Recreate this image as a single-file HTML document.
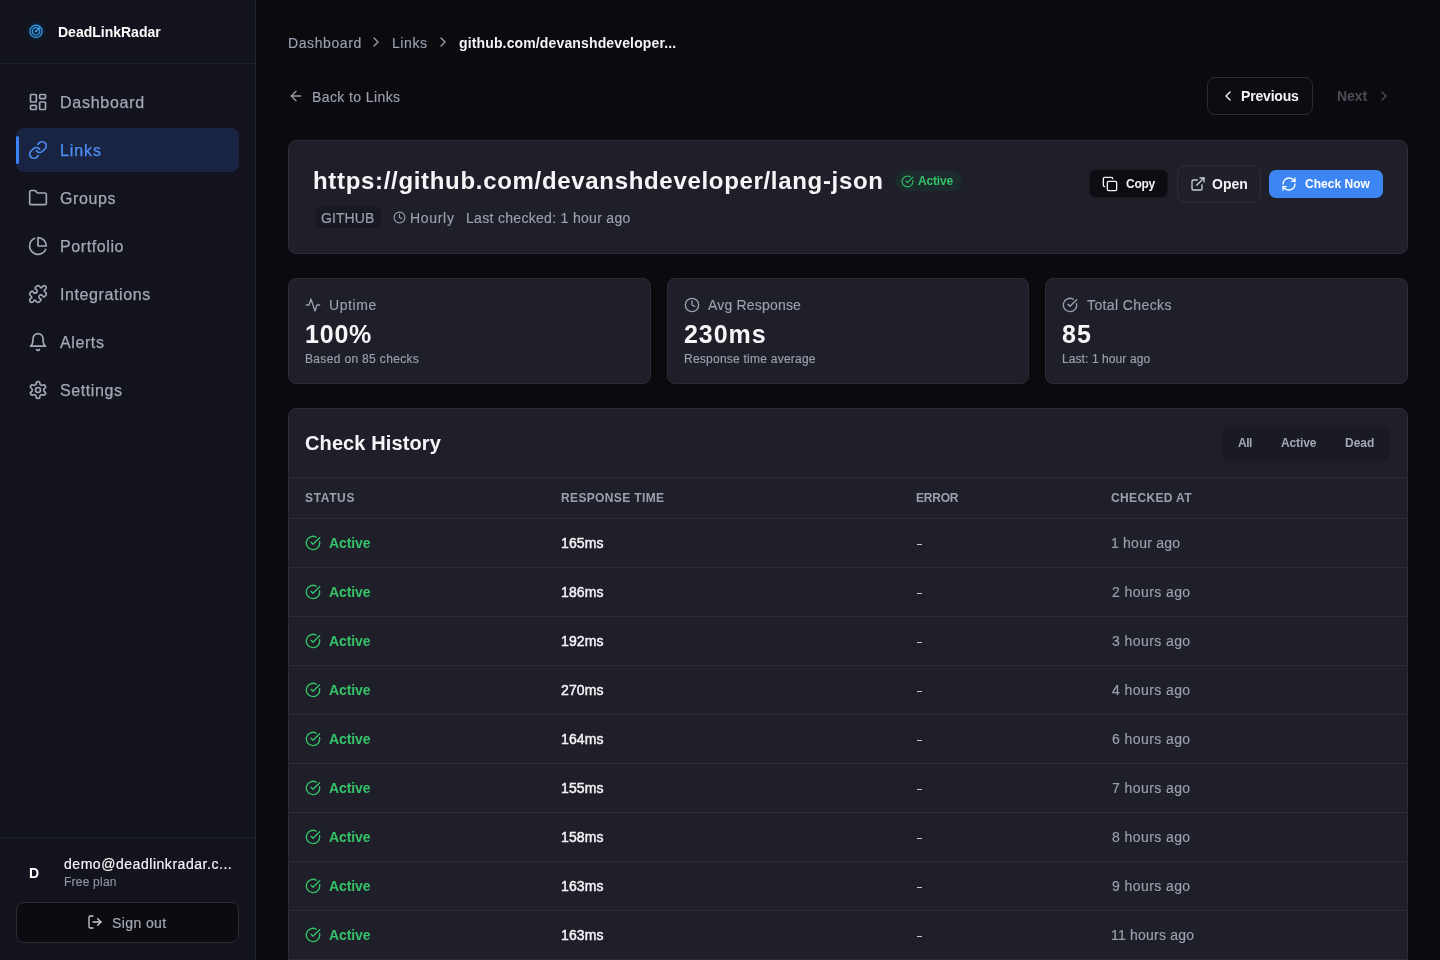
<!DOCTYPE html>
<html><head><meta charset="utf-8">
<style>
*{box-sizing:border-box;margin:0;padding:0}
html,body{width:1440px;height:960px;overflow:hidden;background:#0a0a0f;font-family:"Liberation Sans",sans-serif;color:#f4f4f6}
.abs{position:absolute}
svg{display:block}
.sb{position:absolute;left:0;top:0;width:256px;height:960px;background:#12131c;border-right:1px solid #21232b}
.sbh{position:absolute;left:0;top:0;width:255px;height:64px;border-bottom:1px solid #1f2129}
.txt{position:absolute;white-space:nowrap;line-height:1;will-change:transform}
</style></head><body>
<div class="sb">
<div class="sbh"></div>
<svg class="abs" style="left:26px;top:21px;filter:drop-shadow(0 0 2px rgba(10,90,190,0.9))" width="20" height="20" viewBox="0 0 20 20" fill="none" stroke="#389ed8" stroke-width="1.15" stroke-linecap="round"><circle cx="10" cy="10.3" r="6.1"/><circle cx="10" cy="10.3" r="3.7"/><path d="M10 10.3 13.9 6.6" stroke="#4bb0ea"/><circle cx="10" cy="10.3" r="0.7" fill="#8fd0f5" stroke="none"/></svg>
<div class="txt" style="left:58px;top:25px;font-size:14px;font-weight:700;color:#ffffff;">DeadLinkRadar</div>
<svg class="abs" style="left:28px;top:92px" width="20" height="20" viewBox="0 0 24 24" fill="none" stroke="#a3a8b5" stroke-width="2" stroke-linecap="round" stroke-linejoin="round"><rect width="7" height="9" x="3" y="3" rx="1"/><rect width="7" height="5" x="14" y="3" rx="1"/><rect width="7" height="9" x="14" y="12" rx="1"/><rect width="7" height="5" x="3" y="16" rx="1"/></svg>
<div class="txt" style="left:60px;top:95px;font-size:16px;color:#a3a8b5;letter-spacing:0.74px;-webkit-text-stroke:0.25px #a3a8b5;">Dashboard</div>
<div class="abs" style="left:16px;top:128px;width:223px;height:44px;background:#192442;border-radius:8px;"></div>
<div class="abs" style="left:16px;top:136px;width:3px;height:28px;background:#3b82f6;border-radius:2px;"></div>
<svg class="abs" style="left:28px;top:140px" width="20" height="20" viewBox="0 0 24 24" fill="none" stroke="#4d8ff5" stroke-width="2" stroke-linecap="round" stroke-linejoin="round"><path d="M10 13a5 5 0 0 0 7.54.54l3-3a5 5 0 0 0-7.07-7.07l-1.72 1.71"/><path d="M14 11a5 5 0 0 0-7.54-.54l-3 3a5 5 0 0 0 7.07 7.07l1.71-1.71"/></svg>
<div class="txt" style="left:60px;top:143px;font-size:16px;color:#4d8ff5;letter-spacing:0.91px;-webkit-text-stroke:0.25px #4d8ff5;">Links</div>
<svg class="abs" style="left:28px;top:188px" width="20" height="20" viewBox="0 0 24 24" fill="none" stroke="#a3a8b5" stroke-width="2" stroke-linecap="round" stroke-linejoin="round"><path d="M20 20a2 2 0 0 0 2-2V8a2 2 0 0 0-2-2h-7.9a2 2 0 0 1-1.69-.9L9.6 3.9A2 2 0 0 0 7.93 3H4a2 2 0 0 0-2 2v13a2 2 0 0 0 2 2Z"/></svg>
<div class="txt" style="left:60px;top:191px;font-size:16px;color:#a3a8b5;letter-spacing:0.6px;-webkit-text-stroke:0.25px #a3a8b5;">Groups</div>
<svg class="abs" style="left:28px;top:236px" width="20" height="20" viewBox="0 0 24 24" fill="none" stroke="#a3a8b5" stroke-width="2" stroke-linecap="round" stroke-linejoin="round"><path d="M21.21 15.89A10 10 0 1 1 8 2.83"/><path d="M22 12A10 10 0 0 0 12 2v10z"/></svg>
<div class="txt" style="left:60px;top:239px;font-size:16px;color:#a3a8b5;letter-spacing:0.6px;-webkit-text-stroke:0.25px #a3a8b5;">Portfolio</div>
<svg class="abs" style="left:28px;top:284px" width="20" height="20" viewBox="0 0 24 24" fill="none" stroke="#a3a8b5" stroke-width="2" stroke-linecap="round" stroke-linejoin="round"><path d="M19.439 7.85c-.049.322.059.648.289.878l1.568 1.568c.47.47.706 1.087.706 1.704s-.235 1.233-.706 1.704l-1.611 1.611a.98.98 0 0 1-.837.276c-.47-.07-.802-.48-.968-.925a2.501 2.501 0 1 0-3.214 3.214c.446.166.855.497.925.968a.979.979 0 0 1-.276.837l-1.61 1.61a2.404 2.404 0 0 1-1.705.707 2.402 2.402 0 0 1-1.704-.706l-1.568-1.568a1.026 1.026 0 0 0-.877-.29c-.493.074-.84.504-1.02.968a2.5 2.5 0 1 1-3.237-3.237c.464-.18.894-.527.967-1.02a1.026 1.026 0 0 0-.289-.877l-1.568-1.568A2.402 2.402 0 0 1 1.998 12c0-.617.236-1.234.706-1.704L4.23 8.77c.24-.24.581-.353.917-.303.515.077.877.528 1.073 1.01a2.5 2.5 0 1 0 3.259-3.259c-.482-.196-.933-.558-1.01-1.073-.05-.336.062-.676.303-.917l1.525-1.525A2.402 2.402 0 0 1 12 1.998c.617 0 1.234.236 1.704.706l1.568 1.568c.23.23.556.338.877.29.493-.074.84-.504 1.02-.968a2.5 2.5 0 1 1 3.237 3.237c-.464.18-.894.527-.967 1.02Z"/></svg>
<div class="txt" style="left:60px;top:287px;font-size:16px;color:#a3a8b5;letter-spacing:0.6px;-webkit-text-stroke:0.25px #a3a8b5;">Integrations</div>
<svg class="abs" style="left:28px;top:332px" width="20" height="20" viewBox="0 0 24 24" fill="none" stroke="#a3a8b5" stroke-width="2" stroke-linecap="round" stroke-linejoin="round"><path d="M6 8a6 6 0 0 1 12 0c0 7 3 9 3 9H3s3-2 3-9"/><path d="M10.3 21a1.94 1.94 0 0 0 3.4 0"/></svg>
<div class="txt" style="left:60px;top:335px;font-size:16px;color:#a3a8b5;letter-spacing:0.6px;-webkit-text-stroke:0.25px #a3a8b5;">Alerts</div>
<svg class="abs" style="left:28px;top:380px" width="20" height="20" viewBox="0 0 24 24" fill="none" stroke="#a3a8b5" stroke-width="2" stroke-linecap="round" stroke-linejoin="round"><path d="M12.22 2h-.44a2 2 0 0 0-2 2v.18a2 2 0 0 1-1 1.73l-.43.25a2 2 0 0 1-2 0l-.15-.08a2 2 0 0 0-2.73.73l-.22.38a2 2 0 0 0 .73 2.73l.15.1a2 2 0 0 1 1 1.72v.51a2 2 0 0 1-1 1.74l-.15.09a2 2 0 0 0-.73 2.73l.22.38a2 2 0 0 0 2.73.73l.15-.08a2 2 0 0 1 2 0l.43.25a2 2 0 0 1 1 1.73V20a2 2 0 0 0 2 2h.44a2 2 0 0 0 2-2v-.18a2 2 0 0 1 1-1.73l.43-.25a2 2 0 0 1 2 0l.15.08a2 2 0 0 0 2.73-.73l.22-.39a2 2 0 0 0-.73-2.73l-.15-.08a2 2 0 0 1-1-1.74v-.5a2 2 0 0 1 1-1.74l.15-.09a2 2 0 0 0 .73-2.73l-.22-.38a2 2 0 0 0-2.73-.73l-.15.08a2 2 0 0 1-2 0l-.43-.25a2 2 0 0 1-1-1.73V4a2 2 0 0 0-2-2z"/><circle cx="12" cy="12" r="3"/></svg>
<div class="txt" style="left:60px;top:383px;font-size:16px;color:#a3a8b5;letter-spacing:0.6px;-webkit-text-stroke:0.25px #a3a8b5;">Settings</div>
<div class="abs" style="left:0px;top:837px;width:255px;height:1px;background:#1f2129;"></div>
<div class="txt" style="left:29px;top:866px;font-size:14px;font-weight:700;color:#ffffff;">D</div>
<div class="txt" style="left:64px;top:857px;font-size:14px;color:#f4f4f6;letter-spacing:0.54px;-webkit-text-stroke:0.2px #f4f4f6;">demo@deadlinkradar.c...</div>
<div class="txt" style="left:64px;top:876px;font-size:12px;color:#8d93a3;letter-spacing:0.22px;-webkit-text-stroke:0.15px #8d93a3;">Free plan</div>
<div class="abs" style="left:16px;top:902px;width:223px;height:41px;background:#0b0b10;border-radius:8px;border:1px solid #2a2b33;"></div>
<svg class="abs" style="left:86.7px;top:914px" width="16" height="16" viewBox="0 0 24 24" fill="none" stroke="#c9ccd4" stroke-width="2" stroke-linecap="round" stroke-linejoin="round"><path d="M9 21H5a2 2 0 0 1-2-2V5a2 2 0 0 1 2-2h4"/><path d="m16 17 5-5-5-5"/><path d="M21 12H9"/></svg>
<div class="txt" style="left:112px;top:916px;font-size:14px;color:#a3a8b5;letter-spacing:0.4px;-webkit-text-stroke:0.2px #a3a8b5;">Sign out</div>
</div>
<div class="txt" style="left:288px;top:35.5px;font-size:14px;color:#9aa0ad;letter-spacing:0.6px;-webkit-text-stroke:0.15px #9aa0ad;">Dashboard</div>
<svg class="abs" style="left:368px;top:34px" width="16" height="16" viewBox="0 0 24 24" fill="none" stroke="#9aa0ad" stroke-width="2" stroke-linecap="round" stroke-linejoin="round"><path d="m9 18 6-6-6-6"/></svg>
<div class="txt" style="left:392px;top:35.5px;font-size:14px;color:#9aa0ad;letter-spacing:0.58px;-webkit-text-stroke:0.15px #9aa0ad;">Links</div>
<svg class="abs" style="left:435px;top:34px" width="16" height="16" viewBox="0 0 24 24" fill="none" stroke="#9aa0ad" stroke-width="2" stroke-linecap="round" stroke-linejoin="round"><path d="m9 18 6-6-6-6"/></svg>
<div class="txt" style="left:459px;top:35.5px;font-size:14px;font-weight:700;color:#f4f4f6;letter-spacing:0.14px;">github.com/devanshdeveloper...</div>
<svg class="abs" style="left:288px;top:88px" width="16" height="16" viewBox="0 0 24 24" fill="none" stroke="#9aa0ad" stroke-width="2" stroke-linecap="round" stroke-linejoin="round"><path d="m12 19-7-7 7-7"/><path d="M19 12H5"/></svg>
<div class="txt" style="left:312px;top:90px;font-size:14px;color:#9aa0ad;letter-spacing:0.4px;-webkit-text-stroke:0.15px #9aa0ad;">Back to Links</div>
<div class="abs" style="left:1207px;top:77px;width:106px;height:38px;background:#0c0c11;border-radius:8px;border:1px solid #2b2c35;"></div>
<svg class="abs" style="left:1220px;top:88px" width="16" height="16" viewBox="0 0 24 24" fill="none" stroke="#f4f4f6" stroke-width="2" stroke-linecap="round" stroke-linejoin="round"><path d="m15 18-6-6 6-6"/></svg>
<div class="txt" style="left:1241px;top:89px;font-size:14px;font-weight:700;color:#f4f4f6;letter-spacing:-0.18px;">Previous</div>
<div class="txt" style="left:1337px;top:89px;font-size:14px;font-weight:700;color:#4a4d58;letter-spacing:-0.09px;">Next</div>
<svg class="abs" style="left:1376px;top:88px" width="16" height="16" viewBox="0 0 24 24" fill="none" stroke="#4a4d58" stroke-width="2" stroke-linecap="round" stroke-linejoin="round"><path d="m9 18 6-6-6-6"/></svg>
<div class="abs" style="left:288px;top:140px;width:1120px;height:114px;background:#1e1f29;border-radius:8px;border:1px solid #2b2c36;"></div>
<div class="txt" style="left:313px;top:169px;font-size:24px;font-weight:700;color:#f6f6f8;letter-spacing:0.68px;">https://github.com/devanshdeveloper/lang-json</div>
<div class="abs" style="left:895px;top:171px;width:67px;height:20px;background:#1c2b2c;border-radius:10px;"></div>
<svg class="abs" style="left:901.2px;top:174.6px" width="13" height="13" viewBox="0 0 24 24" fill="none" stroke="#35c268" stroke-width="2" stroke-linecap="round" stroke-linejoin="round"><path d="M21.801 10A10 10 0 1 1 17 3.335"/><path d="m9 11 3 3L22 4"/></svg>
<div class="txt" style="left:918px;top:175px;font-size:12px;font-weight:700;color:#35c268;letter-spacing:-0.17px;">Active</div>
<div class="abs" style="left:316px;top:207px;width:65px;height:21px;background:#181922;border-radius:4px;"></div>
<div class="txt" style="left:321px;top:211px;font-size:14px;color:#9aa0ad;letter-spacing:0.09px;-webkit-text-stroke:0.15px #9aa0ad;">GITHUB</div>
<svg class="abs" style="left:393px;top:211px" width="13" height="13" viewBox="0 0 24 24" fill="none" stroke="#9aa0ad" stroke-width="2" stroke-linecap="round" stroke-linejoin="round"><circle cx="12" cy="12" r="10"/><path d="M12 6v6l4 2"/></svg>
<div class="txt" style="left:410px;top:211px;font-size:14px;color:#9aa0ad;letter-spacing:0.69px;-webkit-text-stroke:0.15px #9aa0ad;">Hourly</div>
<div class="txt" style="left:466px;top:211px;font-size:14px;color:#9aa0ad;letter-spacing:0.31px;-webkit-text-stroke:0.15px #9aa0ad;">Last checked: 1 hour ago</div>
<div class="abs" style="left:1089px;top:169px;width:79px;height:29px;background:#0c0c11;border-radius:7px;border:1px solid #16171e;"></div>
<svg class="abs" style="left:1102px;top:176px" width="16" height="16" viewBox="0 0 24 24" fill="none" stroke="#f4f4f6" stroke-width="2" stroke-linecap="round" stroke-linejoin="round"><rect width="14" height="14" x="8" y="8" rx="2" ry="2"/><path d="M4 16c-1.1 0-2-.9-2-2V4c0-1.1.9-2 2-2h10c1.1 0 2 .9 2 2"/></svg>
<div class="txt" style="left:1126px;top:178px;font-size:12px;font-weight:700;color:#f4f4f6;letter-spacing:-0.24px;">Copy</div>
<div class="abs" style="left:1177px;top:165px;width:84px;height:38px;background:#1f2029;border-radius:8px;border:1px solid #2d2e38;"></div>
<svg class="abs" style="left:1190px;top:176px" width="16" height="16" viewBox="0 0 24 24" fill="none" stroke="#c9ccd4" stroke-width="2" stroke-linecap="round" stroke-linejoin="round"><path d="M15 3h6v6"/><path d="M10 14 21 3"/><path d="M18 13v6a2 2 0 0 1-2 2H5a2 2 0 0 1-2-2V8a2 2 0 0 1 2-2h6"/></svg>
<div class="txt" style="left:1212px;top:177px;font-size:14px;font-weight:700;color:#f4f4f6;">Open</div>
<div class="abs" style="left:1269px;top:170px;width:114px;height:28px;background:#3d85f2;border-radius:7px;"></div>
<svg class="abs" style="left:1281px;top:176px" width="16" height="16" viewBox="0 0 24 24" fill="none" stroke="#ffffff" stroke-width="2" stroke-linecap="round" stroke-linejoin="round"><path d="M3 12a9 9 0 0 1 9-9 9.75 9.75 0 0 1 6.74 2.74L21 8"/><path d="M21 3v5h-5"/><path d="M21 12a9 9 0 0 1-9 9 9.75 9.75 0 0 1-6.74-2.74L3 16"/><path d="M8 16H3v5"/></svg>
<div class="txt" style="left:1305px;top:178px;font-size:12px;font-weight:700;color:#ffffff;letter-spacing:0.03px;">Check Now</div>
<div class="abs" style="left:288px;top:278px;width:363px;height:106px;background:#1e1f29;border-radius:8px;border:1px solid #2b2c36;"></div>
<svg class="abs" style="left:304.5px;top:297px" width="16" height="16" viewBox="0 0 24 24" fill="none" stroke="#9aa0ad" stroke-width="2" stroke-linecap="round" stroke-linejoin="round"><path d="M22 12h-4l-3 9L9 3l-3 9H2"/></svg>
<div class="txt" style="left:329px;top:298px;font-size:14px;color:#9aa0ad;letter-spacing:0.61px;-webkit-text-stroke:0.15px #9aa0ad;">Uptime</div>
<div class="txt" style="left:305px;top:322px;font-size:25px;font-weight:700;color:#f6f6f8;letter-spacing:0.8px;">100%</div>
<div class="txt" style="left:305px;top:353px;font-size:12px;color:#9aa0ad;letter-spacing:0.34px;-webkit-text-stroke:0.15px #9aa0ad;">Based on 85 checks</div>
<div class="abs" style="left:667px;top:278px;width:362px;height:106px;background:#1e1f29;border-radius:8px;border:1px solid #2b2c36;"></div>
<svg class="abs" style="left:683.5px;top:297px" width="16" height="16" viewBox="0 0 24 24" fill="none" stroke="#9aa0ad" stroke-width="2" stroke-linecap="round" stroke-linejoin="round"><circle cx="12" cy="12" r="10"/><path d="M12 6v6l4 2"/></svg>
<div class="txt" style="left:708px;top:298px;font-size:14px;color:#9aa0ad;letter-spacing:0.19px;-webkit-text-stroke:0.15px #9aa0ad;">Avg Response</div>
<div class="txt" style="left:684px;top:322px;font-size:25px;font-weight:700;color:#f6f6f8;letter-spacing:0.96px;">230ms</div>
<div class="txt" style="left:684px;top:353px;font-size:12px;color:#9aa0ad;letter-spacing:0.24px;-webkit-text-stroke:0.15px #9aa0ad;">Response time average</div>
<div class="abs" style="left:1045px;top:278px;width:363px;height:106px;background:#1e1f29;border-radius:8px;border:1px solid #2b2c36;"></div>
<svg class="abs" style="left:1061.5px;top:297px" width="16" height="16" viewBox="0 0 24 24" fill="none" stroke="#9aa0ad" stroke-width="2" stroke-linecap="round" stroke-linejoin="round"><path d="M21.801 10A10 10 0 1 1 17 3.335"/><path d="m9 11 3 3L22 4"/></svg>
<div class="txt" style="left:1087px;top:298px;font-size:14px;color:#9aa0ad;letter-spacing:0.39px;-webkit-text-stroke:0.15px #9aa0ad;">Total Checks</div>
<div class="txt" style="left:1062px;top:322px;font-size:25px;font-weight:700;color:#f6f6f8;letter-spacing:1.1px;">85</div>
<div class="txt" style="left:1062px;top:353px;font-size:12px;color:#9aa0ad;letter-spacing:0.09px;-webkit-text-stroke:0.15px #9aa0ad;">Last: 1 hour ago</div>
<div class="abs" style="left:288px;top:408px;width:1120px;height:600px;background:#1e1f29;border-radius:8px;border:1px solid #2b2c36;"></div>
<div class="txt" style="left:305px;top:433px;font-size:20px;font-weight:700;color:#f6f6f8;letter-spacing:0.11px;">Check History</div>
<div class="abs" style="left:1222px;top:425px;width:168px;height:36px;background:#191a23;border-radius:8px;"></div>
<div class="txt" style="left:1238px;top:437px;font-size:12px;font-weight:700;color:#a3a8b5;letter-spacing:-0.5px;">All</div>
<div class="txt" style="left:1281px;top:437px;font-size:12px;font-weight:700;color:#a3a8b5;letter-spacing:-0.11px;">Active</div>
<div class="txt" style="left:1345px;top:437px;font-size:12px;font-weight:700;color:#a3a8b5;">Dead</div>
<div class="abs" style="left:289px;top:477px;width:1118px;height:1px;background:#2b2c36;"></div>
<div class="txt" style="left:305px;top:492px;font-size:12px;font-weight:700;color:#9aa0ad;letter-spacing:0.64px;">STATUS</div>
<div class="txt" style="left:561px;top:492px;font-size:12px;font-weight:700;color:#9aa0ad;letter-spacing:0.36px;">RESPONSE TIME</div>
<div class="txt" style="left:916px;top:492px;font-size:12px;font-weight:700;color:#9aa0ad;letter-spacing:-0.2px;">ERROR</div>
<div class="txt" style="left:1111px;top:492px;font-size:12px;font-weight:700;color:#9aa0ad;letter-spacing:0.36px;">CHECKED AT</div>
<div class="abs" style="left:289px;top:518px;width:1118px;height:1px;background:#2b2c36;"></div>
<svg class="abs" style="left:305px;top:535px" width="16" height="16" viewBox="0 0 24 24" fill="none" stroke="#35c268" stroke-width="2" stroke-linecap="round" stroke-linejoin="round"><path d="M21.801 10A10 10 0 1 1 17 3.335"/><path d="m9 11 3 3L22 4"/></svg>
<div class="txt" style="left:329px;top:536px;font-size:14px;font-weight:700;color:#35c268;letter-spacing:-0.11px;">Active</div>
<div class="txt" style="left:561px;top:536px;font-size:14px;color:#f4f4f6;letter-spacing:0.15px;-webkit-text-stroke:0.45px #f4f4f6;">165ms</div>
<div class="abs" style="left:917px;top:544px;width:5px;height:1px;background:#c4c7cf;"></div>
<div class="txt" style="left:1111px;top:536px;font-size:14px;color:#9aa0ad;letter-spacing:0.22px;-webkit-text-stroke:0.15px #9aa0ad;">1 hour ago</div>
<div class="abs" style="left:289px;top:567px;width:1118px;height:1px;background:#2b2c36;"></div>
<svg class="abs" style="left:305px;top:584px" width="16" height="16" viewBox="0 0 24 24" fill="none" stroke="#35c268" stroke-width="2" stroke-linecap="round" stroke-linejoin="round"><path d="M21.801 10A10 10 0 1 1 17 3.335"/><path d="m9 11 3 3L22 4"/></svg>
<div class="txt" style="left:329px;top:585px;font-size:14px;font-weight:700;color:#35c268;letter-spacing:-0.11px;">Active</div>
<div class="txt" style="left:561px;top:585px;font-size:14px;color:#f4f4f6;letter-spacing:0.15px;-webkit-text-stroke:0.45px #f4f4f6;">186ms</div>
<div class="abs" style="left:917px;top:593px;width:5px;height:1px;background:#c4c7cf;"></div>
<div class="txt" style="left:1111.5px;top:585px;font-size:14px;color:#9aa0ad;letter-spacing:0.42px;-webkit-text-stroke:0.15px #9aa0ad;">2 hours ago</div>
<div class="abs" style="left:289px;top:616px;width:1118px;height:1px;background:#2b2c36;"></div>
<svg class="abs" style="left:305px;top:633px" width="16" height="16" viewBox="0 0 24 24" fill="none" stroke="#35c268" stroke-width="2" stroke-linecap="round" stroke-linejoin="round"><path d="M21.801 10A10 10 0 1 1 17 3.335"/><path d="m9 11 3 3L22 4"/></svg>
<div class="txt" style="left:329px;top:634px;font-size:14px;font-weight:700;color:#35c268;letter-spacing:-0.11px;">Active</div>
<div class="txt" style="left:561px;top:634px;font-size:14px;color:#f4f4f6;letter-spacing:0.15px;-webkit-text-stroke:0.45px #f4f4f6;">192ms</div>
<div class="abs" style="left:917px;top:642px;width:5px;height:1px;background:#c4c7cf;"></div>
<div class="txt" style="left:1111.5px;top:634px;font-size:14px;color:#9aa0ad;letter-spacing:0.42px;-webkit-text-stroke:0.15px #9aa0ad;">3 hours ago</div>
<div class="abs" style="left:289px;top:665px;width:1118px;height:1px;background:#2b2c36;"></div>
<svg class="abs" style="left:305px;top:682px" width="16" height="16" viewBox="0 0 24 24" fill="none" stroke="#35c268" stroke-width="2" stroke-linecap="round" stroke-linejoin="round"><path d="M21.801 10A10 10 0 1 1 17 3.335"/><path d="m9 11 3 3L22 4"/></svg>
<div class="txt" style="left:329px;top:683px;font-size:14px;font-weight:700;color:#35c268;letter-spacing:-0.11px;">Active</div>
<div class="txt" style="left:561px;top:683px;font-size:14px;color:#f4f4f6;letter-spacing:0.15px;-webkit-text-stroke:0.45px #f4f4f6;">270ms</div>
<div class="abs" style="left:917px;top:691px;width:5px;height:1px;background:#c4c7cf;"></div>
<div class="txt" style="left:1111.5px;top:683px;font-size:14px;color:#9aa0ad;letter-spacing:0.42px;-webkit-text-stroke:0.15px #9aa0ad;">4 hours ago</div>
<div class="abs" style="left:289px;top:714px;width:1118px;height:1px;background:#2b2c36;"></div>
<svg class="abs" style="left:305px;top:731px" width="16" height="16" viewBox="0 0 24 24" fill="none" stroke="#35c268" stroke-width="2" stroke-linecap="round" stroke-linejoin="round"><path d="M21.801 10A10 10 0 1 1 17 3.335"/><path d="m9 11 3 3L22 4"/></svg>
<div class="txt" style="left:329px;top:732px;font-size:14px;font-weight:700;color:#35c268;letter-spacing:-0.11px;">Active</div>
<div class="txt" style="left:561px;top:732px;font-size:14px;color:#f4f4f6;letter-spacing:0.15px;-webkit-text-stroke:0.45px #f4f4f6;">164ms</div>
<div class="abs" style="left:917px;top:740px;width:5px;height:1px;background:#c4c7cf;"></div>
<div class="txt" style="left:1111.5px;top:732px;font-size:14px;color:#9aa0ad;letter-spacing:0.42px;-webkit-text-stroke:0.15px #9aa0ad;">6 hours ago</div>
<div class="abs" style="left:289px;top:763px;width:1118px;height:1px;background:#2b2c36;"></div>
<svg class="abs" style="left:305px;top:780px" width="16" height="16" viewBox="0 0 24 24" fill="none" stroke="#35c268" stroke-width="2" stroke-linecap="round" stroke-linejoin="round"><path d="M21.801 10A10 10 0 1 1 17 3.335"/><path d="m9 11 3 3L22 4"/></svg>
<div class="txt" style="left:329px;top:781px;font-size:14px;font-weight:700;color:#35c268;letter-spacing:-0.11px;">Active</div>
<div class="txt" style="left:561px;top:781px;font-size:14px;color:#f4f4f6;letter-spacing:0.15px;-webkit-text-stroke:0.45px #f4f4f6;">155ms</div>
<div class="abs" style="left:917px;top:789px;width:5px;height:1px;background:#c4c7cf;"></div>
<div class="txt" style="left:1111.5px;top:781px;font-size:14px;color:#9aa0ad;letter-spacing:0.42px;-webkit-text-stroke:0.15px #9aa0ad;">7 hours ago</div>
<div class="abs" style="left:289px;top:812px;width:1118px;height:1px;background:#2b2c36;"></div>
<svg class="abs" style="left:305px;top:829px" width="16" height="16" viewBox="0 0 24 24" fill="none" stroke="#35c268" stroke-width="2" stroke-linecap="round" stroke-linejoin="round"><path d="M21.801 10A10 10 0 1 1 17 3.335"/><path d="m9 11 3 3L22 4"/></svg>
<div class="txt" style="left:329px;top:830px;font-size:14px;font-weight:700;color:#35c268;letter-spacing:-0.11px;">Active</div>
<div class="txt" style="left:561px;top:830px;font-size:14px;color:#f4f4f6;letter-spacing:0.15px;-webkit-text-stroke:0.45px #f4f4f6;">158ms</div>
<div class="abs" style="left:917px;top:838px;width:5px;height:1px;background:#c4c7cf;"></div>
<div class="txt" style="left:1111.5px;top:830px;font-size:14px;color:#9aa0ad;letter-spacing:0.42px;-webkit-text-stroke:0.15px #9aa0ad;">8 hours ago</div>
<div class="abs" style="left:289px;top:861px;width:1118px;height:1px;background:#2b2c36;"></div>
<svg class="abs" style="left:305px;top:878px" width="16" height="16" viewBox="0 0 24 24" fill="none" stroke="#35c268" stroke-width="2" stroke-linecap="round" stroke-linejoin="round"><path d="M21.801 10A10 10 0 1 1 17 3.335"/><path d="m9 11 3 3L22 4"/></svg>
<div class="txt" style="left:329px;top:879px;font-size:14px;font-weight:700;color:#35c268;letter-spacing:-0.11px;">Active</div>
<div class="txt" style="left:561px;top:879px;font-size:14px;color:#f4f4f6;letter-spacing:0.15px;-webkit-text-stroke:0.45px #f4f4f6;">163ms</div>
<div class="abs" style="left:917px;top:887px;width:5px;height:1px;background:#c4c7cf;"></div>
<div class="txt" style="left:1111.5px;top:879px;font-size:14px;color:#9aa0ad;letter-spacing:0.42px;-webkit-text-stroke:0.15px #9aa0ad;">9 hours ago</div>
<div class="abs" style="left:289px;top:910px;width:1118px;height:1px;background:#2b2c36;"></div>
<svg class="abs" style="left:305px;top:927px" width="16" height="16" viewBox="0 0 24 24" fill="none" stroke="#35c268" stroke-width="2" stroke-linecap="round" stroke-linejoin="round"><path d="M21.801 10A10 10 0 1 1 17 3.335"/><path d="m9 11 3 3L22 4"/></svg>
<div class="txt" style="left:329px;top:928px;font-size:14px;font-weight:700;color:#35c268;letter-spacing:-0.11px;">Active</div>
<div class="txt" style="left:561px;top:928px;font-size:14px;color:#f4f4f6;letter-spacing:0.15px;-webkit-text-stroke:0.45px #f4f4f6;">163ms</div>
<div class="abs" style="left:917px;top:936px;width:5px;height:1px;background:#c4c7cf;"></div>
<div class="txt" style="left:1111px;top:928px;font-size:14px;color:#9aa0ad;letter-spacing:0.22px;-webkit-text-stroke:0.15px #9aa0ad;">11 hours ago</div>
<div class="abs" style="left:289px;top:959px;width:1118px;height:1px;background:#2b2c36;"></div>
</body></html>
